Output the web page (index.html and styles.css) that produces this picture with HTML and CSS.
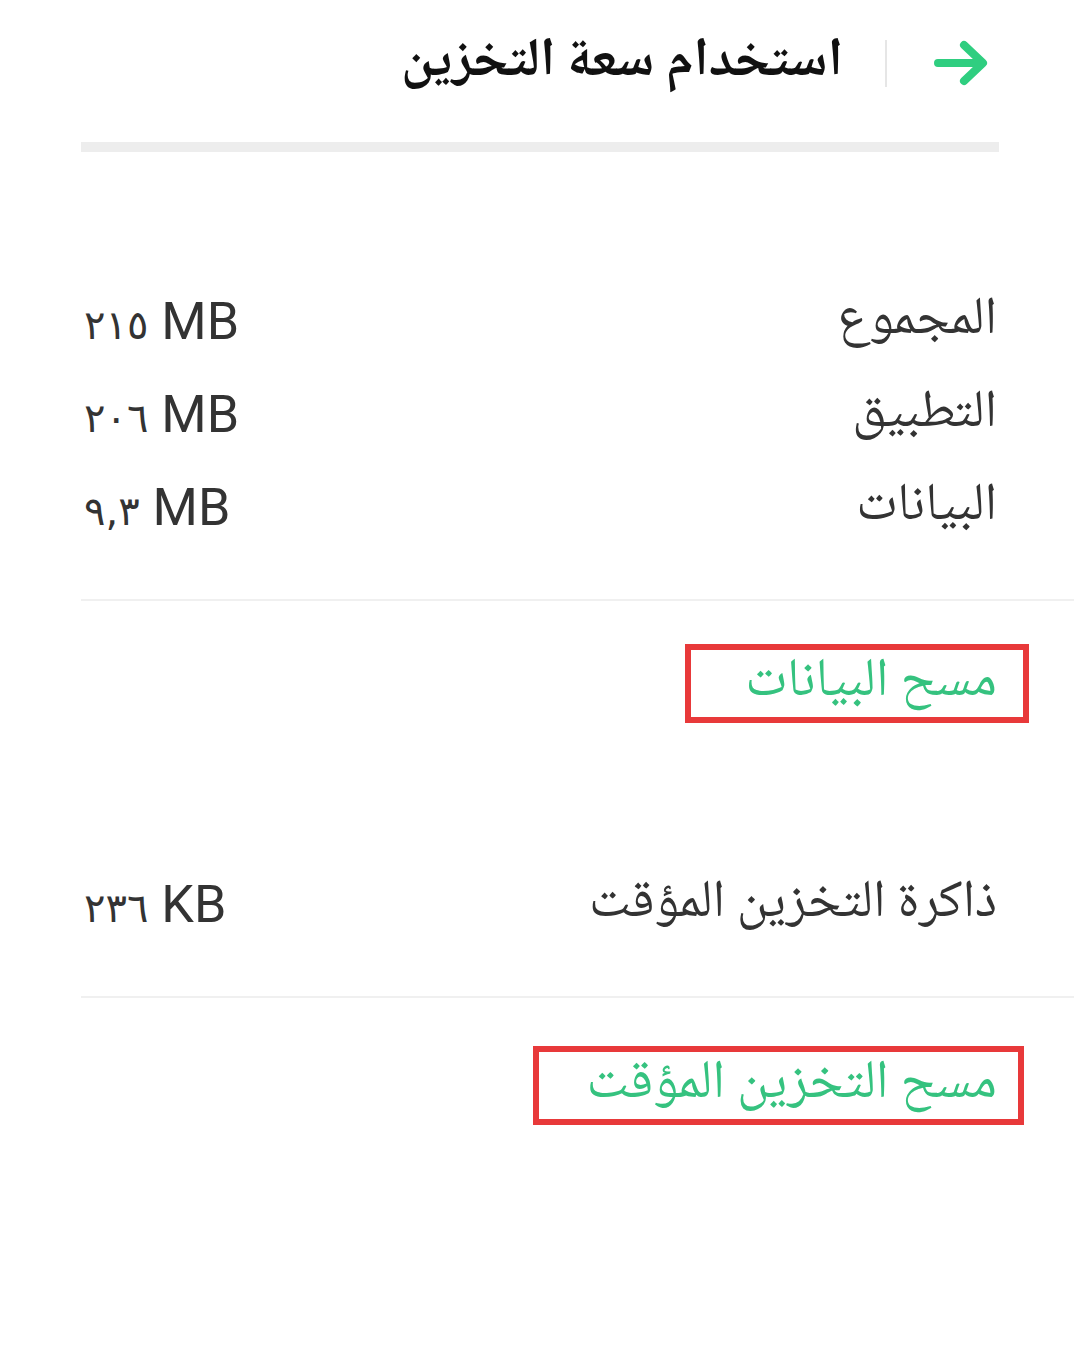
FILE: index.html
```html
<!DOCTYPE html>
<html lang="ar" dir="rtl">
<head>
<meta charset="utf-8">
<title>استخدام سعة التخزين</title>
<link rel="stylesheet" href="styles.css">
</head>
<body>
<div class="page">
  <header class="topbar">
    <svg class="back" width="54" height="46" viewBox="0 0 54 46" aria-hidden="true">
      <path d="M4 23 H48 M30 5 L49 23 L30 41" fill="none" stroke="#2fce80" stroke-width="8" stroke-linecap="round" stroke-linejoin="round"/>
    </svg>
    <span class="sep"></span>
    <h1 class="title">استخدام سعة التخزين</h1>
  </header>
  <div class="bar"></div>

  <section class="list first">
    <div class="row"><span class="label">المجموع</span><span class="value" dir="ltr"><span class="num">٢١٥</span> MB</span></div>
    <div class="row"><span class="label">التطبيق</span><span class="value" dir="ltr"><span class="num">٢٠٦</span> MB</span></div>
    <div class="row"><span class="label">البيانات</span><span class="value" dir="ltr"><span class="num">٩,٣</span> MB</span></div>
  </section>
  <div class="divider"></div>
  <div class="action">
    <button class="btn btn-data">مسح البيانات</button>
  </div>

  <section class="list second">
    <div class="row"><span class="label">ذاكرة التخزين المؤقت</span><span class="value" dir="ltr"><span class="num">٢٣٦</span> KB</span></div>
  </section>
  <div class="divider"></div>
  <div class="action action-last">
    <button class="btn btn-cache">مسح التخزين المؤقت</button>
  </div>
</div>
</body>
</html>
```

FILE: styles.css
```css
html, body {
  margin: 0;
  padding: 0;
  background: #ffffff;
}

body {
  font-family: "Noto Naskh Arabic", "Noto Sans Arabic", "DejaVu Sans", sans-serif;
  color: #333333;
}

.page {
  width: 1074px;
  min-height: 1370px;
  direction: rtl;
}

.topbar {
  display: flex;
  align-items: center;
  height: 126px;
  padding-right: 86px;
  box-sizing: border-box;
}

.back {
  display: block;
  flex: none;
}

.sep {
  width: 2px;
  height: 47px;
  background: #e6e6e6;
  margin: 0 47px 0 42px;
  flex: none;
}

.title {
  margin: 0;
  font-size: 54px;
  font-weight: 700;
  color: #111111;
  line-height: 1;
}

.bar {
  height: 10px;
  background: #ededed;
  margin: 16px 75px 0 81px;
}

.list {
  margin: 0 77px 0 84px;
}

.list.first {
  margin-top: 123px;
}

.list.second {
  margin-top: 147px;
}

.row {
  display: flex;
  justify-content: space-between;
  align-items: center;
  height: 93px;
}

.label {
  font-size: 53px;
  line-height: 1;
  color: #333333;
}

.value {
  font-family: Roboto, "DejaVu Sans", sans-serif;
  font-size: 52px;
  line-height: 1;
  color: #333333;
}

.num {
  font-family: "DejaVu Sans", sans-serif;
  font-size: 40px;
}

.divider {
  height: 2px;
  background: #f0f0f0;
  margin: 45px 0 0 81px;
}

.action {
  display: flex;
  padding: 0 77px 0 0;
  margin-top: 54px;
}

.action.action-last {
  margin-top: 59px;
}

.btn {
  position: relative;
  border: 0;
  background: none;
  padding: 0;
  margin: 0;
  font-family: inherit;
  font-size: 54px;
  line-height: 56px;
  color: #35c27f;
  cursor: pointer;
  overflow: visible;
}

.btn::after {
  content: "";
  position: absolute;
  top: -11px;
  bottom: -12px;
  border: 6px solid #e8393a;
}

.btn-data::after {
  left: -60px;
  right: -32px;
}

.btn-cache::after {
  left: -53px;
  right: -27px;
}
```
